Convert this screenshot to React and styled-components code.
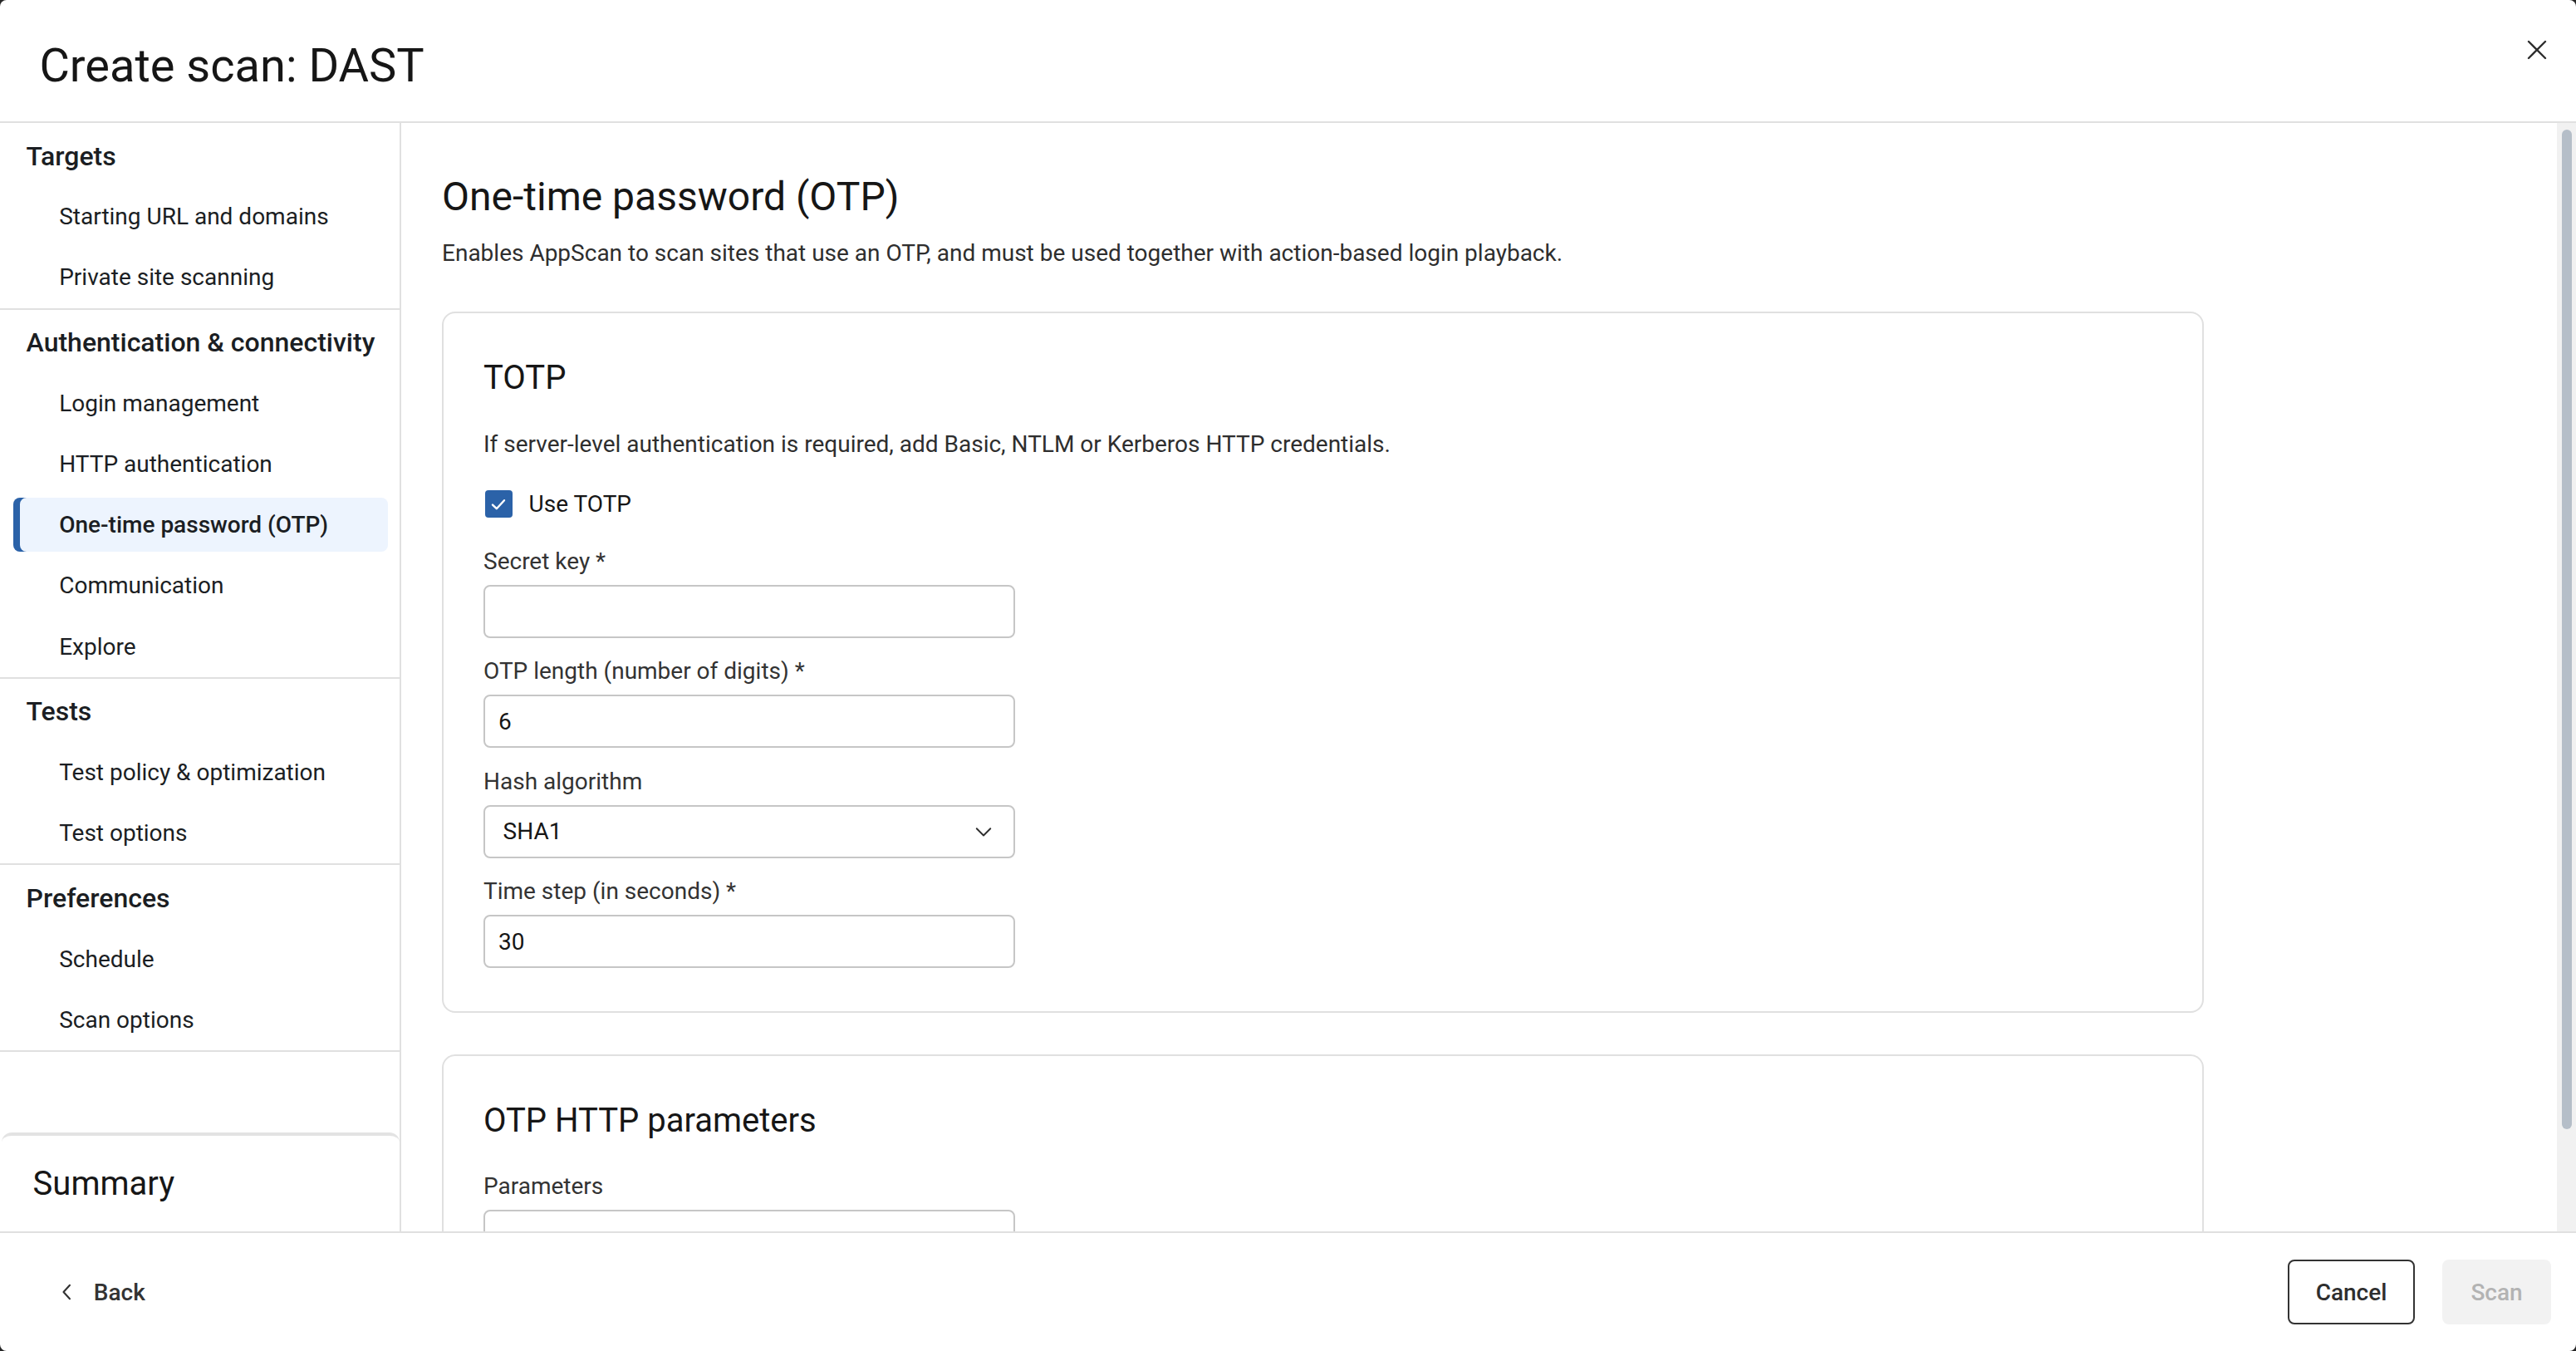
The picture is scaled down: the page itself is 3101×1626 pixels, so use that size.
import React from 'react'
import styled, { createGlobalStyle } from 'styled-components'

const GlobalStyle = createGlobalStyle`
html, body {
margin: 0;
padding: 0;
background: #262626;
overflow: hidden;
}
* {
box-sizing: border-box;
}
`;

const navGroups = [
    { title: 'Targets', items: ['Starting URL and domains', 'Private site scanning'] },
    {
        title: 'Authentication & connectivity',
        items: ['Login management', 'HTTP authentication', 'One-time password (OTP)', 'Communication', 'Explore'],
    },
    { title: 'Tests', items: ['Test policy & optimization', 'Test options'] },
    { title: 'Preferences', items: ['Schedule', 'Scan options'] },
]

const CloseIcon = () => (
    <svg width="16" height="16" viewBox="0 0 16 16" fill="none">
        <path d="M3 3L13 13M13 3L3 13" stroke="#2e2e2e" strokeWidth="1.2" strokeLinecap="round" />
    </svg>
)

const ChevronDown = () => (
    <svg width="12" height="12" viewBox="0 0 16 16" fill="none">
        <path d="M2.5 5.5L8 11L13.5 5.5" stroke="#2e2e2e" strokeWidth="1.3" strokeLinecap="round" strokeLinejoin="round" />
    </svg>
)

const ChevronLeft = () => (
    <svg width="12" height="12" viewBox="0 0 16 16" fill="none">
        <path d="M10 2.5L5 8L10 13.5" stroke="#333" strokeWidth="1.4" strokeLinecap="round" strokeLinejoin="round" />
    </svg>
)

const CheckMark = () => (
    <svg width="16" height="16" viewBox="0 0 16 16" fill="none">
        <path d="M4.5 8.3L6.9 10.6L11.5 5.6" stroke="#fff" strokeWidth="1.2" strokeLinecap="round" strokeLinejoin="round" />
    </svg>
)

const App = () => {
    return (
        <>
            <GlobalStyle />
            <Modal>
                <Header>
                    <Title>Create scan: DAST</Title>
                    <CloseButton aria-label="Close">
                        <CloseIcon />
                    </CloseButton>
                </Header>
                <Body>
                    <Sidebar>
                        <Nav>
                            {navGroups.map((group) => (
                                <Group key={group.title}>
                                    <GroupTitle>{group.title}</GroupTitle>
                                    {group.items.map((item) => (
                                        <NavItem key={item} $active={item === 'One-time password (OTP)'}>
                                            {item}
                                        </NavItem>
                                    ))}
                                </Group>
                            ))}
                        </Nav>
                        <Summary>Summary</Summary>
                    </Sidebar>
                    <Main>
                        <Scroller>
                            <PageTitle>One-time password (OTP)</PageTitle>
                            <PageDesc>
                                Enables AppScan to scan sites that use an OTP, and must be used together with action-based login playback.
                            </PageDesc>
                            <Card>
                                <CardTitle>TOTP</CardTitle>
                                <CardDesc>
                                    If server-level authentication is required, add Basic, NTLM or Kerberos HTTP credentials.
                                </CardDesc>
                                <CheckRow>
                                    <CheckBox>
                                        <CheckMark />
                                    </CheckBox>
                                    <CheckLabel>Use TOTP</CheckLabel>
                                </CheckRow>
                                <Field $first>
                                    <Label>Secret key *</Label>
                                    <Input />
                                </Field>
                                <Field>
                                    <Label>OTP length (number of digits) *</Label>
                                    <Input>6</Input>
                                </Field>
                                <Field>
                                    <Label>Hash algorithm</Label>
                                    <Select>
                                        <span>SHA1</span>
                                        <ChevronDown />
                                    </Select>
                                </Field>
                                <Field>
                                    <Label>Time step (in seconds) *</Label>
                                    <Input>30</Input>
                                </Field>
                            </Card>
                            <Card $second>
                                <CardTitle>OTP HTTP parameters</CardTitle>
                                <Field $afterTitle>
                                    <Label>Parameters</Label>
                                    <Input />
                                </Field>
                            </Card>
                        </Scroller>
                        <ScrollTrack>
                            <ScrollThumb />
                        </ScrollTrack>
                    </Main>
                </Body>
                <Footer>
                    <BackButton>
                        <ChevronLeft />
                        <span>Back</span>
                    </BackButton>
                    <Actions>
                        <SecondaryButton>Cancel</SecondaryButton>
                        <PrimaryButton disabled>Scan</PrimaryButton>
                    </Actions>
                </Footer>
            </Modal>
        </>
    )
}

const Modal = styled.div`
zoom: 2;
width: 1550.5px;
height: 813px;
background: #fff;
border-radius: 4px;
overflow: hidden;
display: flex;
flex-direction: column;
font-family: Roboto, "Noto Sans", Arial, sans-serif;
color: #161616;
`;

const Header = styled.div`
height: 74px;
flex-shrink: 0;
display: flex;
align-items: flex-start;
justify-content: space-between;
padding: 0 11.5px 0 23.7px;
border-bottom: 1px solid #e0e0e0;
`;

const Title = styled.h1`
margin: 21.5px 0 0;
font-size: 28px;
line-height: 36px;
font-weight: 400;
color: #161616;
`;

const CloseButton = styled.button`
margin-top: 18px;
width: 24px;
height: 24px;
padding: 0;
border: none;
background: transparent;
display: flex;
align-items: center;
justify-content: center;
cursor: pointer;
`;

const Body = styled.div`
flex: 1;
min-height: 0;
display: flex;
`;

const Sidebar = styled.div`
width: 241.5px;
flex-shrink: 0;
border-right: 1px solid #e0e0e0;
display: flex;
flex-direction: column;
`;

const Nav = styled.div`
flex: 1;
`;

const Group = styled.div`
display: flex;
flex-direction: column;
padding-top: 1.5px;
border-bottom: 1px solid #e0e0e0;
`;

const GroupTitle = styled.div`
height: 36.6px;
display: flex;
align-items: center;
padding-left: 15.8px;
font-size: 16px;
font-weight: 500;
color: #1b1e23;
`;

const NavItem = styled.div`
height: 32.6px;
margin: 2px 7px 2px 8px;
padding-left: 27.6px;
display: flex;
align-items: center;
font-size: 14px;
color: #1b1e23;
border-radius: 4px;
background: ${(p) => (p.$active ? '#edf4fe' : 'transparent')};
box-shadow: ${(p) => (p.$active ? 'inset 4px 0 0 #2b62a8' : 'none')};
font-weight: ${(p) => (p.$active ? 500 : 400)};
`;

const Summary = styled.div`
height: 59.5px;
flex-shrink: 0;
margin: 0 0 0 1px;
border-top: 2px solid #e3e3e3;
border-radius: 6px 6px 0 0;
display: flex;
align-items: center;
padding-left: 18.8px;
font-size: 20px;
color: #161616;
`;

const Main = styled.div`
flex: 1;
min-width: 0;
display: flex;
`;

const Scroller = styled.div`
flex: 1;
overflow: hidden;
padding: 28.7px 24px 0 24.5px;
`;

const PageTitle = styled.h2`
margin: 0;
font-size: 24px;
line-height: 32px;
font-weight: 400;
color: #161616;
`;

const PageDesc = styled.p`
margin: 7.6px 0 0;
font-size: 14px;
line-height: 20px;
color: #2e2e2e;
`;

const Card = styled.div`
width: 1060.5px;
margin-top: ${(p) => (p.$second ? '25px' : '25.2px')};
border: 1px solid #e0e0e0;
border-radius: 8px;
padding: 25px 24px 26px;
`;

const CardTitle = styled.h3`
margin: 0;
font-size: 20px;
line-height: 28px;
font-weight: 400;
color: #161616;
`;

const CardDesc = styled.p`
margin: 16px 0 0;
font-size: 14px;
line-height: 20px;
color: #2e2e2e;
`;

const CheckRow = styled.label`
margin-top: 16px;
height: 20px;
display: flex;
align-items: center;
gap: 10px;
padding-left: 0.8px;
`;

const CheckBox = styled.span`
width: 16.5px;
height: 16.5px;
border-radius: 2px;
background: #2b62a8;
display: flex;
align-items: center;
justify-content: center;
`;

const CheckLabel = styled.span`
font-size: 14px;
color: #161616;
`;

const Field = styled.div`
margin-top: ${(p) => (p.$first ? '14.3px' : p.$afterTitle ? '15.5px' : '10.3px')};
display: flex;
flex-direction: column;
gap: 4px;
`;

const Label = styled.div`
font-size: 14px;
line-height: 20px;
color: #333;
`;

const Input = styled.div`
width: 320px;
height: 32px;
border: 1px solid #c6c6c6;
border-radius: 4px;
padding: 0 8px;
display: flex;
align-items: center;
font-size: 14px;
color: #161616;
`;

const Select = styled(Input)`
justify-content: space-between;
padding: 0 12px 0 10.8px;
`;

const ScrollTrack = styled.div`
width: 11.5px;
flex-shrink: 0;
background: #f1f1f1;
padding: 4px 2.5px 0 3px;
`;

const ScrollThumb = styled.div`
height: 601.5px;
border-radius: 4px;
background: #b5bec8;
`;

const Footer = styled.div`
height: 72px;
flex-shrink: 0;
border-top: 1px solid #e0e0e0;
display: flex;
align-items: center;
justify-content: space-between;
padding: 0 15px 0 34.5px;
`;

const BackButton = styled.button`
display: flex;
align-items: center;
gap: 9.9px;
padding: 0;
border: none;
background: transparent;
font-family: inherit;
font-size: 14px;
font-weight: 500;
color: #333;
cursor: pointer;
`;

const Actions = styled.div`
display: flex;
align-items: center;
gap: 16.5px;
`;

const SecondaryButton = styled.button`
width: 76.5px;
height: 39px;
border: 1px solid #333;
border-radius: 4px;
background: #fff;
font-family: inherit;
font-size: 14px;
font-weight: 500;
color: #2e2e2e;
`;

const PrimaryButton = styled.button`
width: 65.5px;
height: 39px;
border: none;
border-radius: 4px;
background: #f2f2f2;
font-family: inherit;
font-size: 14px;
font-weight: 500;
color: #b3b3b3;
`;

export default App
